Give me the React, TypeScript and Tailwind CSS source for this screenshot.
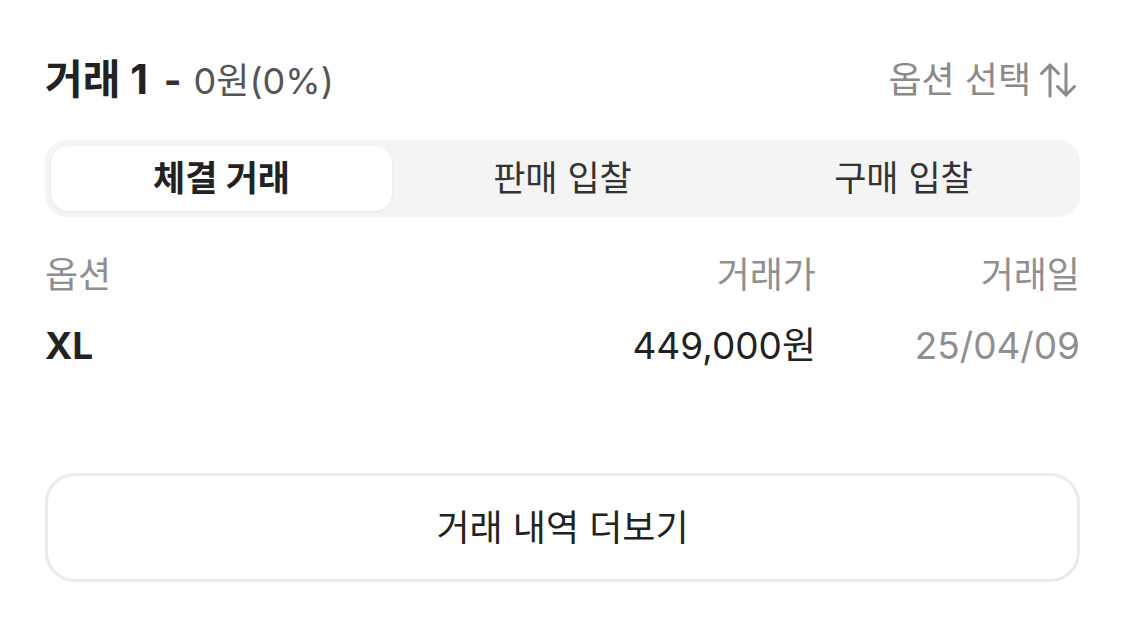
import React from "react";

const font = { fontFamily: 'Inter, "Noto Sans CJK KR", sans-serif' };

function SortIcon() {
  return (
    <svg width="38" height="36" viewBox="0 0 38 36" fill="none" stroke="#8a8a8a" strokeWidth="3" strokeLinecap="round" strokeLinejoin="round">
      <line x1="11" y1="3" x2="11" y2="34" />
      <polyline points="2.5,11.5 11,3 19.5,11.5" />
      <line x1="27" y1="2" x2="27" y2="33" />
      <polyline points="18.5,24.5 27,33 35.5,24.5" />
    </svg>
  );
}

export default function App() {
  return (
    <div className="w-[1125px] h-[618px] bg-white px-[45px] pt-[50px] overflow-hidden" style={font}>
      <div className="flex items-center justify-between h-[60px]">
        <div className="flex items-baseline">
          <span className="text-[41px] font-bold text-[#222222]">거래 1</span>
          <span className="text-[38px] font-bold text-[#333333] ml-[16px]">-</span>
          <span className="text-[36px] text-[#555555] ml-[12px]">0원(0%)</span>
        </div>
        <div className="flex items-center gap-[8px] pr-[3px]">
          <span className="text-[36px] text-[#8a8a8a]">옵션 선택</span>
          <SortIcon />
        </div>
      </div>

      <div className="mt-[30px] h-[77px] rounded-[22px] bg-[#f4f4f4] p-[6px] grid grid-cols-3">
        <div className="rounded-[18px] bg-white shadow-[0_1px_3px_rgba(0,0,0,0.06)] flex items-center justify-center">
          <span className="text-[35px] font-bold text-[#222222]">체결 거래</span>
        </div>
        <div className="flex items-center justify-center">
          <span className="text-[35px] text-[#333333]">판매 입찰</span>
        </div>
        <div className="flex items-center justify-center">
          <span className="text-[35px] text-[#333333]">구매 입찰</span>
        </div>
      </div>

      <div className="mt-[33px] h-[50px] flex items-center">
        <span className="flex-1 text-[36px] text-[#8f8f8f]">옵션</span>
        <span className="w-[300px] text-right text-[36px] text-[#8f8f8f]">거래가</span>
        <span className="w-[264px] text-right text-[36px] text-[#8f8f8f]">거래일</span>
      </div>

      <div className="mt-[21px] h-[50px] flex items-center">
        <span className="flex-1 text-[37px] font-bold text-[#222222]">XL</span>
        <span className="w-[300px] text-right text-[37px] text-[#222222]">449,000원</span>
        <span className="w-[264px] text-right text-[37px] text-[#8f8f8f]">25/04/09</span>
      </div>

      <div className="mt-[102px] h-[109px] rounded-[30px] border-[3px] border-[#ebebeb] flex items-center justify-center">
        <span className="text-[36px] text-[#222222]">거래 내역 더보기</span>
      </div>
    </div>
  );
}
